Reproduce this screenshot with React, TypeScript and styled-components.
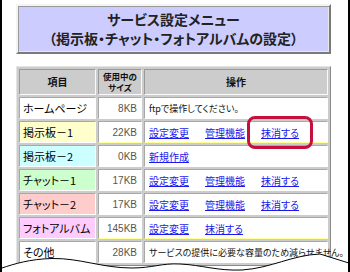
import React from "react"
import styled, { createGlobalStyle } from "styled-components"

const GlobalStyle = createGlobalStyle`
  * { box-sizing: border-box; }
  body {
    margin: 0;
    background: #fff;
    font-family: "Noto Sans CJK JP", "Noto Sans", sans-serif;
    font-feature-settings: "palt";
    color: #111;
  }
`

const Frame = styled.div`
  position: relative;
  width: 350px;
  height: 272px;
  overflow: hidden;
  border-left: 2px solid #000;
  border-right: 2px solid #000;
  padding: 4px 17px 0 14px;
  background: #fff;
`

const TitleBox = styled.div`
  height: 50px;
  display: flex;
  flex-direction: column;
  align-items: center;
  justify-content: center;
  background: #ccccff;
  border: 2px solid;
  border-color: #f4f4f4 #7a7a7a #7a7a7a #f4f4f4;
  box-shadow: inset 1px 1px 0 #9a9a9a, inset -1px -1px 0 #e8e8e8;
  font-size: 14px;
  font-weight: bold;
  line-height: 19px;
  color: #222;
`

const MenuTable = styled.table`
  width: 315px;
  margin-top: 12px;
  table-layout: fixed;
  border-collapse: separate;
  border-spacing: 2px;
  background: #cccccc;
  border: 1px solid;
  border-color: #e4e4e4 #8a8a8a #8a8a8a #e4e4e4;
`

const HeadCell = styled.th<{ $w?: number; $small?: boolean }>`
  width: ${(p) => (p.$w ? `${p.$w}px` : "auto")};
  height: 26px;
  padding: 0;
  background: #cccccc;
  border: 1px solid;
  border-color: #9a9a9a #fafafa #fafafa #9a9a9a;
  font-size: ${(p) => (p.$small ? "8.5px" : "10px")};
  line-height: ${(p) => (p.$small ? "11px" : "12px")};
  font-weight: bold;
  text-align: center;
  vertical-align: middle;
`

const Cell = styled.td<{ $bg?: string; $edge?: string }>`
  height: 22px;
  padding: 0 4px;
  background: ${(p) => p.$bg || "#fff"};
  border: 1px solid;
  border-color: #a8a8a8 #fff ${(p) => p.$edge || "#fff"} #a8a8a8;
  vertical-align: middle;
  white-space: nowrap;
  overflow: hidden;
`

const NameCell = styled(Cell)`
  font-size: 11px;
  padding-left: 3px;
  color: #000;
`

const SizeCell = styled(Cell)`
  font-family: "Liberation Sans", Arial, sans-serif;
  font-size: 10px;
  color: #555;
  text-align: right;
`

const OpsCell = styled(Cell)`
  overflow: visible;
  font-size: 9px;
`

const LinkRow = styled.div`
  display: flex;
  gap: 16px;
  font-size: 10px;
`

const OpLink = styled.a`
  position: relative;
  color: #1a1aee;
  text-decoration: underline;
  text-underline-offset: 1px;
  cursor: pointer;
`

const Highlight = styled.span`
  position: absolute;
  left: -14px;
  right: -14px;
  top: -9px;
  bottom: -9px;
  border: 3px solid #c5103e;
  border-radius: 8px;
  pointer-events: none;
`

const TornEdge = styled.svg`
  position: absolute;
  left: 0;
  bottom: 0;
  width: 350px;
  height: 30px;
`

type Row = {
  name: string
  size: string
  bg?: string
  edge?: string
  note?: string
  links?: string[]
  mark?: string
}

const rows: Row[] = [
  { name: "ホームページ", size: "8KB", note: "ftpで操作してください。" },
  { name: "掲示板－1", size: "22KB", bg: "#ffffcc", edge: "#ffff99", links: ["設定変更", "管理機能", "抹消する"], mark: "抹消する" },
  { name: "掲示板－2", size: "0KB", bg: "#ccffff", links: ["新規作成"] },
  { name: "チャット－1", size: "17KB", bg: "#ccffcc", links: ["設定変更", "管理機能", "抹消する"] },
  { name: "チャット－2", size: "17KB", bg: "#ffcccc", links: ["設定変更", "管理機能", "抹消する"] },
  { name: "フォトアルバム", size: "145KB", bg: "#ffccff", edge: "#ffff99", links: ["設定変更", "抹消する"] },
  { name: "その他", size: "28KB", note: "サービスの提供に必要な容量のため減らせません。" },
]

const wave =
  "M0,268 C12,264 28,259 50,258.5 C78,258 100,268 130,268 C150,268 160,263 178,264 C200,265 215,271 240,270 C270,268 290,255 318,254 L350,264"

export default function App() {
  return (
    <>
      <GlobalStyle />
      <Frame>
        <TitleBox>
          <div>サービス設定メニュー</div>
          <div>（掲示板・チャット・フォトアルバムの設定）</div>
        </TitleBox>
        <MenuTable>
          <thead>
            <tr>
              <HeadCell $w={77}>項目</HeadCell>
              <HeadCell $w={44} $small>
                使用中の
                <br />
                サイズ
              </HeadCell>
              <HeadCell>操作</HeadCell>
            </tr>
          </thead>
          <tbody>
            {rows.map((row) => (
              <tr key={row.name}>
                <NameCell $bg={row.bg}>{row.name}</NameCell>
                <SizeCell $edge={row.edge}>{row.size}</SizeCell>
                <OpsCell $edge={row.edge}>
                  {row.note ? (
                    row.note
                  ) : (
                    <LinkRow>
                      {row.links!.map((l) => (
                        <OpLink key={l}>
                          {l}
                          {row.mark === l && <Highlight />}
                        </OpLink>
                      ))}
                    </LinkRow>
                  )}
                </OpsCell>
              </tr>
            ))}
          </tbody>
        </MenuTable>
        <TornEdge viewBox="0 242 350 30">
          <path d={`${wave} L350,272 L0,272 Z`} fill="#fff" />
          <path d={wave} fill="none" stroke="#000" strokeWidth="1" />
        </TornEdge>
      </Frame>
    </>
  )
}
